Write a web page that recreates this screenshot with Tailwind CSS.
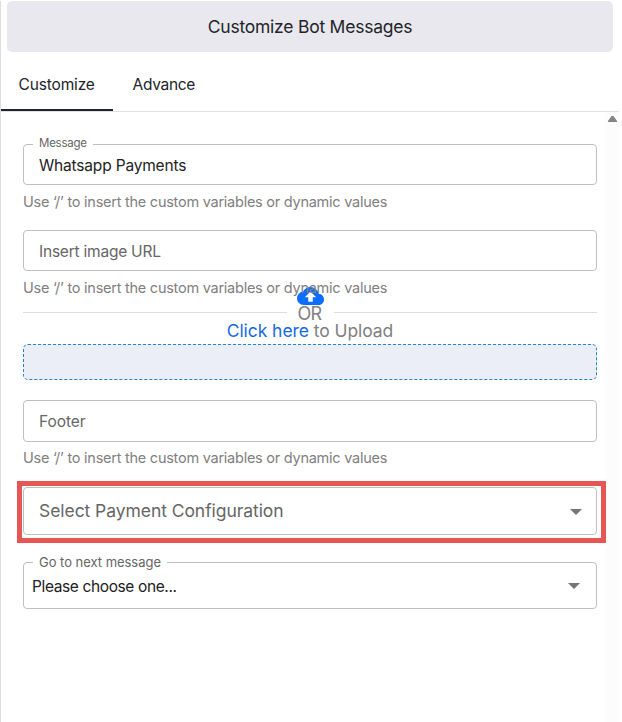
<!DOCTYPE html>
<html lang="en">
<head>
<meta charset="utf-8">
<title>Customize Bot Messages</title>
<script src="https://cdn.jsdelivr.net/npm/@tailwindcss/browser@4"></script>
</head>
<body class="w-[622px] h-[722px] overflow-hidden bg-white font-['Inter',sans-serif] font-[370] text-[#212529]">
<div class="w-[619px] h-[721px] mt-px border-l border-[#dedede] flex flex-col">
  <header class="ml-1.5 w-[606px] h-[51px] shrink-0 rounded-[5px] bg-[#e9e8ee] flex items-center justify-center">
    <h1 class="pt-0.5 text-[17.5px] font-[370] tracking-[-0.23px] whitespace-nowrap">Customize Bot Messages</h1>
  </header>
  <nav class="h-[60px] shrink-0 flex border-b border-[#dee0e2] text-[15.5px]">
    <div class="w-28 h-[59px] pl-[17.5px] pt-[21px] leading-6 border-b-2 border-[#212529]"><span class="tracking-[-0.15px]">Customize</span></div>
    <div class="pl-[19.5px] pt-[21px] leading-6"><span class="tracking-[-0.3px]">Advance</span></div>
  </nav>
  <div class="flex flex-1">
    <main class="w-[605px] pl-[22px] pr-[9px] pt-8">
      <div class="relative h-[41px] rounded border border-[#bfbfbf] px-[15px] leading-[40px]">
        <label class="absolute left-[9px] top-[-10px] px-1.5 bg-white text-[11.5px] tracking-[-0.25px] leading-4 text-[#666]">Message</label>
        <span class="text-[15.5px] tracking-[-0.18px] text-[#222]">Whatsapp Payments</span>
      </div>
      <p class="h-[45px] pt-1.5 leading-[22px] text-[14.5px] text-[#808080] whitespace-nowrap tracking-[-0.25px]">Use ‘/’ to insert the custom variables or dynamic values</p>
      <div class="h-[41px] rounded border border-[#bfbfbf] px-[15px] leading-[41px] text-[#666]"><span class="text-[15.5px] tracking-[-0.22px]">Insert image URL</span></div>
      <p class="h-[33px] pt-1.5 leading-[22px] text-[14.5px] text-[#808080] whitespace-nowrap tracking-[-0.25px]">Use ‘/’ to insert the custom variables or dynamic values</p>
      <div class="relative h-10 pt-[8px]">
        <div class="flex items-center h-0 gap-[11px] text-[#808080]">
          <i class="w-[264px] h-px bg-[#dedede]"></i>
          <span class="flex-1 pt-[3px] -ml-0.5 text-center text-[18px] tracking-[-0.6px]">OR</span>
          <i class="w-[263px] h-px bg-[#dedede]"></i>
        </div>
        <svg class="absolute -z-10 left-[274px] top-[-17px] w-[27px] h-[18px]" viewBox="0 0 24 16" preserveAspectRatio="none"><path fill="#0d6efd" d="M19.35 6.04A7.49 7.49 0 0 0 12 0C9.11 0 6.6 1.64 5.35 4.04A5.994 5.994 0 0 0 0 10c0 3.31 2.69 6 6 6h13c2.76 0 5-2.24 5-5 0-2.64-2.05-4.78-4.65-4.96zM14 9v4h-4V9H7l5-5 5 5h-3z"/></svg>
        <div class="pt-[6px] text-center text-[17.5px] leading-[26px] tracking-[-0.07px] text-[#808080]"><span class="text-[#1769e0]">Click here</span> to Upload</div>
      </div>
      <div class="h-9 rounded-[5px] border border-dashed border-[#2684c6] bg-[#ebeef7]"></div>
      <div class="mt-5 h-[42px] rounded border border-[#bfbfbf] px-[15px] leading-[41px] text-[#666]"><span class="text-[15.5px] tracking-[-0.05px]">Footer</span></div>
      <p class="h-[38px] pt-[5px] leading-[22px] text-[14.5px] text-[#808080] whitespace-nowrap tracking-[-0.25px]">Use ‘/’ to insert the custom variables or dynamic values</p>
      <div class="-ml-[6px] mt-px w-[589px] h-[62px] border-[5px] border-[#e85555] pl-px pr-1 pt-px">
        <div class="h-12 rounded border border-[#bfbfbf] pl-[15px] pr-[14px] flex items-center justify-between text-[#666]">
          <span class="text-[17.5px] tracking-[-0.06px]">Select Payment Configuration</span>
          <svg class="w-3 h-1.5 mt-px" viewBox="0 0 12 6"><path fill="#757575" d="M0 0h12L6 6z"/></svg>
        </div>
      </div>
      <div class="relative mt-[19px] h-[47px] rounded border border-[#bfbfbf] pl-[8px] pr-[16px] flex items-center justify-between">
        <label class="absolute left-[9px] top-[-10px] px-1.5 bg-white text-[13px] tracking-[-0.03px] leading-[18px] text-[#666] whitespace-nowrap">Go to next message</label>
        <span class="text-[15.5px] tracking-[-0.38px] text-[#212121] pt-[3px]">Please choose one...</span>
        <svg class="w-3 h-1.5 mt-px" viewBox="0 0 12 6"><path fill="#757575" d="M0 0h12L6 6z"/></svg>
      </div>
    </main>
    <aside class="w-[13px] bg-[#fcfcfc] pt-1 pl-0.5"><svg class="w-[9px] h-1.5" viewBox="0 0 9 6"><path fill="#858585" d="M0 6V5L3.5 0h2L9 5v1z"/></svg></aside>
  </div>
</div>
</body>
</html>
